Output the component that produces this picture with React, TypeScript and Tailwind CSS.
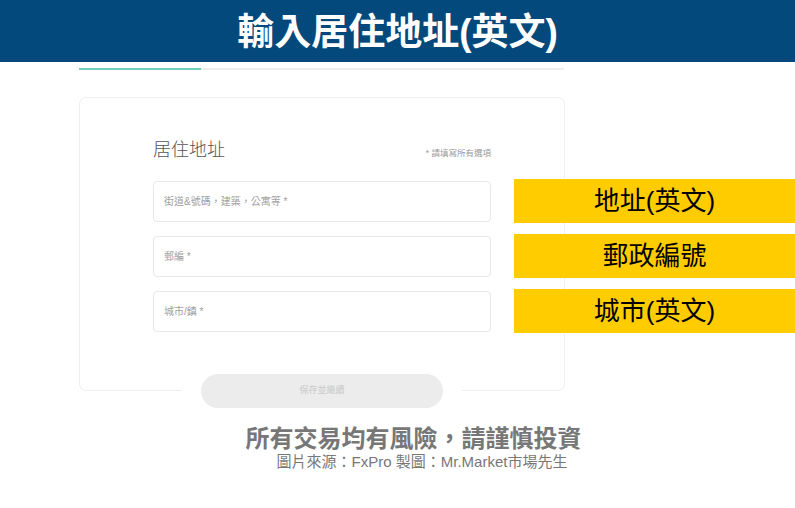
const CJK = "font-['Liberation_Sans','Noto_Sans_CJK_TC',sans-serif]";

const fields = ["街道&號碼，建築，公寓等 *", "郵編 *", "城市/鎮 *"];
const notes = ["地址(英文)", "郵政編號", "城市(英文)"];

export default function App() {
  return (
    <div className={`relative w-[795px] h-[508px] overflow-hidden bg-white ${CJK}`}>
      {/* Banner */}
      <div className="h-[62px] bg-[#03497B] flex items-center justify-center pt-[2px]">
        <h1 className="text-white text-[37px] font-bold leading-none">
          輸入居住地址(英文)
        </h1>
      </div>

      {/* Step progress */}
      <div className="mt-[6px] ml-[79px] w-[485px] h-[2px] bg-[#eeeeee]">
        <div className="w-[122px] h-full bg-[#6fcfbf]" />
      </div>

      {/* Form card */}
      <div className="relative mt-[27px] ml-[79px] w-[486px] h-[294px] rounded-[7px] border border-[#efefef] px-[73px] pt-[43px]">
        <div className="flex items-end justify-between">
          <h2 className="text-[18px] leading-[18px] font-light text-[#555]">居住地址</h2>
          <span className="text-[8.5px] leading-[10px] text-[#999] mb-[1px]">* 請填寫所有選項</span>
        </div>

        <div className="mt-[22px] flex flex-col gap-[14px]">
          {fields.map((f) => (
            <div
              key={f}
              className="h-[41px] rounded-[4px] border border-[#e8e8e8] flex items-center pl-[10px] text-[10px] text-[#a0a0a0]"
            >
              {f}
            </div>
          ))}
        </div>

        <div className="absolute left-[102px] top-[276px] px-[19px] bg-white">
          <div className="w-[242px] h-[34px] rounded-full bg-[#ececec] flex items-center justify-center text-[9px] text-[#c9c9c9]">
            保存並繼續
          </div>
        </div>
      </div>

      {/* Annotation labels */}
      <div className="absolute left-[514px] top-[179px] w-[281px] flex flex-col gap-[11px]">
        {notes.map((n) => (
          <div
            key={n}
            className="h-[44px] bg-[#FFCC00] flex items-center justify-center text-[26px] text-black leading-none"
          >
            {n}
          </div>
        ))}
      </div>

      {/* Footer */}
      <div className="mt-[34px] flex flex-col items-center pl-[32px]">
        <p className="text-[24px] leading-[28px] font-bold text-[#777]">所有交易均有風險，請謹慎投資</p>
        <p className="pl-[17px] text-[15px] leading-[17px] text-[#777]">
          圖片來源：FxPro 製圖：Mr.Market市場先生
        </p>
      </div>
    </div>
  );
}
